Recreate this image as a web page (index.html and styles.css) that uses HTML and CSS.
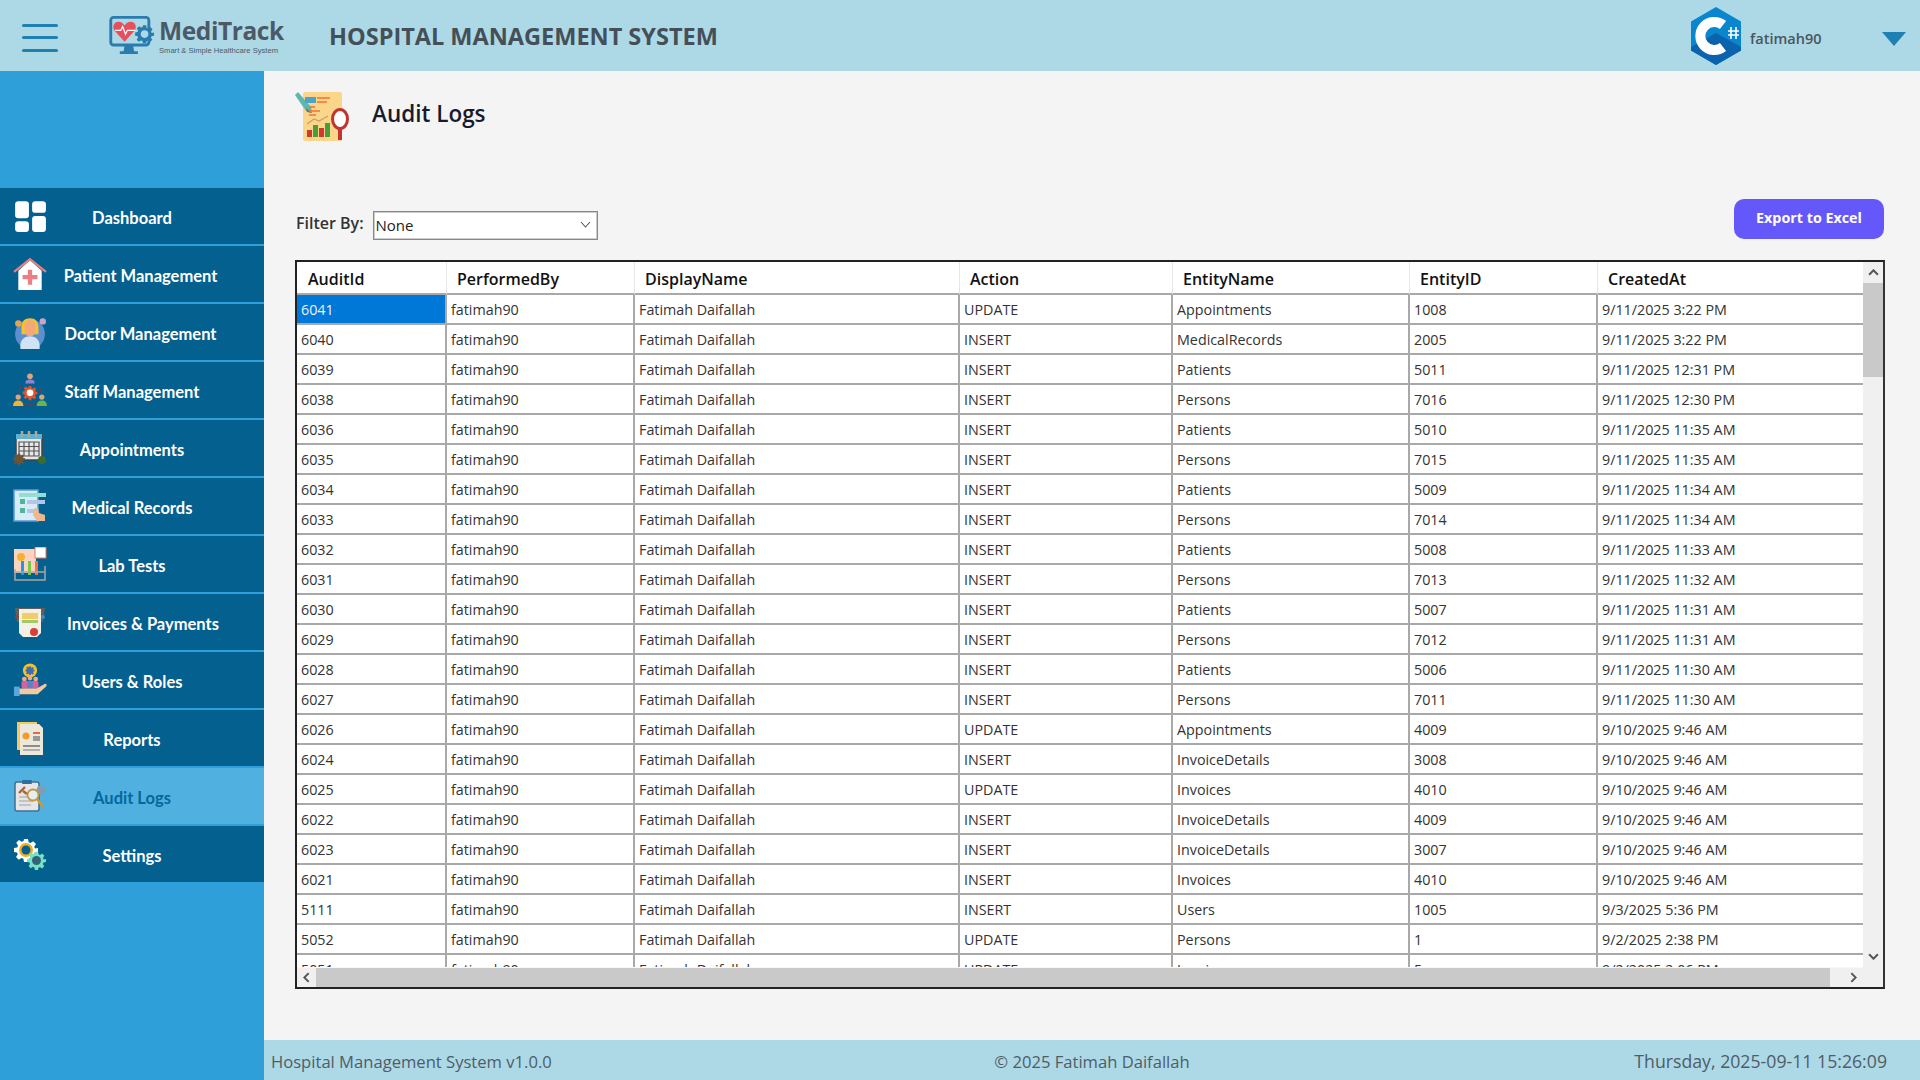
FILE: index.html
```html
<!DOCTYPE html>
<html lang="en">
<head>
  <meta charset="UTF-8"/>
  <title>MediTrack - Audit Logs</title>
  <link rel="stylesheet" href="styles.css">
</head>
<body>
  <svg class="sprites" width="0" height="0">
    <symbol id="gear" viewBox="0 0 24 24">
      <path d="M10 1h4l.6 3.2 1.9.8 2.7-1.8 2.8 2.8-1.8 2.7.8 1.9L24 10v4l-3.2.6-.8 1.9 1.8 2.7-2.8 2.8-2.7-1.8-1.9.8L14 24h-4l-.6-3.2-1.9-.8-2.7 1.8-2.8-2.8 1.8-2.7-.8-1.9L0 14v-4l3.2-.6.8-1.9L2.2 4.8 5 2l2.7 1.8 1.9-.8z"/>
    </symbol>
  </svg>

  <header class="topbar">
    <div class="burger"><span></span><span></span><span></span></div>
    <div class="logo">
      <svg class="logo-mark" viewBox="0 0 56 42">
        <rect x="1.5" y="1.5" width="40" height="29" rx="3" fill="none" stroke="#2a7cae" stroke-width="3"/>
        <path d="M16 27 5.500 15.500C2.500 11 5 6 9.500 6c3 0 5 1.800 6.500 4 1.500-2.200 3.500-4 6.500-4 4.500 0 7 5 4 9.500z" fill="#e5505c"/>
        <path d="M6 15h6l2-4 3 8 2-4h8" fill="none" stroke="#fff" stroke-width="1.300"/>
        <use href="#gear" x="27" y="9" width="20" height="20" fill="#2a7cae"/>
        <circle cx="37" cy="19" r="4" fill="#add8e6"/>
        <path d="M16 31h9l1 6h4v3H11v-3h4z" fill="#2a7cae"/>
      </svg>
      <div class="logo-text">
        <div class="logo-name">MediTrack</div>
        <div class="logo-tag">Smart &amp; Simple Healthcare System</div>
      </div>
    </div>
    <h1 class="app-title">HOSPITAL MANAGEMENT SYSTEM</h1>
    <div class="user">
      <svg class="user-pic" viewBox="0 0 50 58">
        <path d="M25 0 50 14.500v29L25 58 0 43.500v-29z" fill="#0a86cf"/>
        <path d="M0 43.500V40l25-14 25 14v3.500L25 58z" fill="#0b62ad"/>
        <path d="M32 40a14 14 0 1 1 0-22" fill="none" stroke="#fff" stroke-width="10"/>
        <path d="M40 20v12M45 20v12M37 24h11M37 28h11" stroke="#fff" stroke-width="1.600"/>
      </svg>
      <span class="user-name">fatimah90</span>
      <span class="user-caret"></span>
    </div>
  </header>

  <div class="middle">
    <nav class="sidebar">
      <a class="nav-item">
        <svg class="nav-icon" viewBox="0 0 32 32" fill="#fff">
          <rect x="2" y="2" width="13" height="16" rx="3"/><rect x="18" y="2" width="13" height="11" rx="3"/>
          <rect x="2" y="21" width="13" height="10" rx="3"/><rect x="18" y="16" width="13" height="15" rx="3"/>
        </svg>
        <span>Dashboard</span>
      </a>
      <a class="nav-item off-1">
        <svg class="nav-icon" viewBox="0 0 32 32">
          <path d="M5 13 16 3l11 10v18H5z" fill="#fff"/>
          <path d="M1 14 16 2l15 12" fill="none" stroke="#e98080" stroke-width="2.200"/>
          <path d="M14 13h4v5h5v4h-5v5h-4v-5H9v-4h5z" fill="#ec7f86" transform="translate(0 -1)"/>
        </svg>
        <span>Patient Management</span>
      </a>
      <a class="nav-item off-1">
        <svg class="nav-icon" viewBox="0 0 32 32">
          <circle cx="16" cy="18" r="14" fill="#5b8fd0"/>
          <circle cx="5" cy="8" r="3" fill="#e7a44f"/><circle cx="28" cy="6" r="3" fill="#c9a6c9"/>
          <path d="M8 12c0-6 3-9 8-9s8 3 8 9v6H8z" fill="#f2c232"/>
          <path d="M11 10c0-3 2-5 5-5s5 2 5 5v5c0 3-2 5-5 5s-5-2-5-5z" fill="#f3a878"/>
          <path d="M7 32c-1-8 3-12 9-12s10 4 9 12z" fill="#cfe3f4"/>
        </svg>
        <span>Doctor Management</span>
      </a>
      <a class="nav-item">
        <svg class="nav-icon" viewBox="0 0 36 36">
          <circle cx="18" cy="3.500" r="3" fill="#d8a77f"/><path d="M13 11c0-3 2-4 5-4s5 1 5 4z" fill="#8b84d7"/>
          <path d="M8 14 6 22M28 14l2 8M11 33h14" fill="none" stroke="#7a3b4a" stroke-width="1"/>
          <use href="#gear" x="10" y="13" width="16" height="16" fill="#e5532d"/><circle cx="18" cy="21" r="3.500" fill="#fff"/>
          <circle cx="5.500" cy="25.500" r="2.800" fill="#d8a77f"/><path d="M0 35c0-4 2-6 5.500-6s5.500 2 5.500 6z" fill="#f2b233"/>
          <circle cx="30.500" cy="25.500" r="2.800" fill="#d8a77f"/><path d="M25 35c0-4 2-6 5.500-6s5.500 2 5.500 6z" fill="#6cb34a"/>
        </svg>
        <span>Staff Management</span>
      </a>
      <a class="nav-item">
        <svg class="nav-icon" viewBox="0 0 34 34">
          <rect x="3" y="3" width="26" height="26" rx="2" fill="#e7e7e7" stroke="#444" stroke-width="1.500"/>
          <rect x="3" y="3" width="26" height="5" fill="#59b3d6"/>
          <path d="M9 0v6M16 0v6M23 0v6" stroke="#b9a58c" stroke-width="2.500"/>
          <path d="M6 11h20v14H6zM6 15.500h20M6 20h20M11 11v14M16 11v14M21 11v14" fill="none" stroke="#555" stroke-width="1.200"/>
          <use href="#gear" x="0" y="22" width="12" height="12" fill="#6b5536"/>
          <circle cx="29" cy="29" r="4" fill="#3f6b2c"/>
        </svg>
        <span>Appointments</span>
      </a>
      <a class="nav-item">
        <svg class="nav-icon" viewBox="0 0 34 34">
          <rect x="1" y="1" width="24" height="31" fill="#d7ecf7" stroke="#5b9bd5" stroke-width="1.500"/>
          <rect x="6" y="4" width="27" height="4" fill="#8fe0d0"/>
          <rect x="7" y="10" width="5" height="5" fill="#4eb59a"/><rect x="7" y="19" width="5" height="5" fill="#4eb59a"/>
          <rect x="14" y="11" width="18" height="4" fill="#b7c4ea"/><rect x="14" y="20" width="10" height="4" fill="#b7c4ea"/>
          <path d="M22 19l3 0 1 5 6 2v6H24l-4-6z" fill="#efb78c"/>
        </svg>
        <span>Medical Records</span>
      </a>
      <a class="nav-item">
        <svg class="nav-icon" viewBox="0 0 34 34">
          <rect x="1" y="2" width="22" height="24" fill="#fbd3c2"/><circle cx="8" cy="10" r="4" fill="#f2b233"/>
          <rect x="22" y="0" width="11" height="11" fill="#fff" stroke="#e8735a"/>
          <rect x="8" y="14" width="3" height="14" fill="#1d9be0"/><rect x="15" y="14" width="3" height="14" fill="#7ac943"/><rect x="22" y="14" width="3" height="14" fill="#f2743c"/>
          <path d="M2 22v11h30V19M2 25h30" fill="none" stroke="#a8a8a8" stroke-width="1.500"/>
        </svg>
        <span>Lab Tests</span>
      </a>
      <a class="nav-item off-2">
        <svg class="nav-icon" viewBox="0 0 34 34">
          <path d="M2 3h30l-2 14H4z" fill="#5f5f5f"/>
          <path d="M6 4h22v24l-4 4H10l-4-4z" fill="#f4f0e4"/>
          <rect x="9" y="8" width="16" height="6" fill="#f2cb6b"/><rect x="9" y="15" width="16" height="3" fill="#a4c96a"/>
          <circle cx="21" cy="27" r="4" fill="#d9403a"/><circle cx="4" cy="12" r="2" fill="#8a4a2a"/><circle cx="30" cy="12" r="2" fill="#3f8ac6"/>
        </svg>
        <span>Invoices &amp; Payments</span>
      </a>
      <a class="nav-item">
        <svg class="nav-icon" viewBox="0 0 36 36">
          <circle cx="18" cy="8" r="7.500" fill="#f2c232"/><use href="#gear" x="13" y="3" width="10" height="10" fill="#3f6cb0"/>
          <circle cx="12" cy="17" r="2.500" fill="#efa98a"/><circle cx="18" cy="16" r="2.500" fill="#efa98a"/><circle cx="24" cy="17" r="2.500" fill="#efa98a"/>
          <rect x="9" y="19" width="18" height="8" rx="2" fill="#d95fa0"/><rect x="15" y="19" width="6" height="8" fill="#5d80c9"/>
          <path d="M5 27h20l9-5c2 0 2 2 1 3l-9 8H5z" fill="#f5c9a0"/><rect x="1" y="25" width="6" height="10" fill="#5ba6e0"/>
        </svg>
        <span>Users &amp; Roles</span>
      </a>
      <a class="nav-item">
        <svg class="nav-icon" viewBox="0 0 34 34">
          <path d="M4 1h20v28H4z" fill="#f6c958"/><path d="M7 3h19l4 4v27H7z" fill="#ece8dc"/>
          <circle cx="13" cy="15" r="3.500" fill="#f29b26"/><rect x="20" y="11" width="7" height="2" fill="#e9683f"/>
          <rect x="20" y="15" width="7" height="5" fill="#9a9a9a"/><rect x="10" y="24" width="17" height="2" fill="#8d8d8d"/><rect x="10" y="28" width="17" height="2" fill="#b0b0b0"/>
        </svg>
        <span>Reports</span>
      </a>
      <a class="nav-item active">
        <svg class="nav-icon" viewBox="0 0 34 34">
          <rect x="2" y="3" width="24" height="29" rx="2" fill="#e6e6e6" stroke="#3f6f96" stroke-width="1.500"/>
          <rect x="9" y="1" width="10" height="4" rx="1" fill="#2a6f9e"/>
          <path d="M6 18h14M6 22h14M6 26h12" stroke="#a0a0a0" stroke-width="1.200"/>
          <path d="M6 14l6-6M10 12l4 3" stroke="#a5663e" stroke-width="2.400"/>
          <circle cx="28" cy="11" r="4.500" fill="#7f9db4"/>
          <circle cx="20" cy="16" r="5.500" fill="#e2f0f6" stroke="#c2953f" stroke-width="1.800"/>
          <path d="M24 20l6 8" stroke="#d19a2c" stroke-width="2.400"/>
        </svg>
        <span>Audit Logs</span>
      </a>
      <a class="nav-item">
        <svg class="nav-icon" viewBox="0 0 34 34">
          <use href="#gear" x="1" y="1" width="24" height="24" fill="#fff"/><circle cx="13" cy="13" r="7" fill="#f2ad20"/><circle cx="13" cy="13" r="4.500" fill="#05608f"/>
          <use href="#gear" x="14" y="14" width="19" height="19" fill="#74e3c3"/><circle cx="23.500" cy="23.500" r="4.500" fill="#35627a"/>
        </svg>
        <span>Settings</span>
      </a>
    </nav>

    <div class="right">
      <main class="content">
        <div class="page-head">
          <svg class="page-icon" viewBox="0 0 55 50">
            <rect x="8" y="0" width="39" height="49" rx="2" fill="#fbd58a"/>
            <path d="M0 3 3 0l13 15 1 6-6-2z" fill="#5fb8b0"/>
            <path d="M11 16l5 4 1 1-5-1z" fill="#8a6a55"/>
            <rect x="10" y="5" width="11" height="6" fill="#4fa3c8"/>
            <path d="M22 6h13M22 10h10M14 15h6M14 19h11M14 23h7" stroke="#e9743a" stroke-width="1.300"/>
            <path d="M12 32l7-5 5 2 9-5" fill="none" stroke="#c8a06a" stroke-width="1.300"/>
            <rect x="12" y="38" width="5" height="7" fill="#d1382f"/><rect x="18" y="33" width="5" height="12" fill="#4a9e3a"/>
            <rect x="24" y="36" width="5" height="9" fill="#d1382f"/><rect x="30" y="31" width="5" height="14" fill="#4a9e3a"/>
            <ellipse cx="45" cy="27" rx="7.500" ry="9.500" fill="#fff" stroke="#c2342f" stroke-width="3"/>
            <path d="M45 37v11" stroke="#c2342f" stroke-width="4"/>
          </svg>
          <h2 class="page-title">Audit Logs</h2>
        </div>

        <div class="toolbar">
          <label class="filter-label">Filter By:</label>
          <div class="select">
            <span>None</span>
            <svg width="11" height="7" viewBox="0 0 11 7"><path d="M1 1l4.500 5L10 1" fill="none" stroke="#555" stroke-width="1.100"/></svg>
          </div>
          <button class="export-btn">Export to Excel</button>
        </div>

        <div class="grid-box">
          <div class="grid-view">
            <table class="grid">
              <colgroup>
                <col class="c1"><col class="c2"><col class="c3"><col class="c4"><col class="c5"><col class="c6"><col class="c7">
              </colgroup>
              <thead>
                <tr><th>AuditId</th><th>PerformedBy</th><th>DisplayName</th><th>Action</th><th>EntityName</th><th>EntityID</th><th>CreatedAt</th></tr>
              </thead>
              <tbody id="rows"></tbody>
            </table>
          </div>
          <div class="vbar">
            <svg class="arrow" viewBox="0 0 10 6"><path d="M1 5l4-4 4 4" fill="none" stroke="#555" stroke-width="1.800"/></svg>
            <div class="vthumb"></div>
            <svg class="arrow vbar-end" viewBox="0 0 10 6"><path d="M1 1l4 4 4-4" fill="none" stroke="#555" stroke-width="1.800"/></svg>
          </div>
          <div class="hbar">
            <svg class="harrow" viewBox="0 0 6 10"><path d="M5 1 1 5l4 4" fill="none" stroke="#555" stroke-width="1.800"/></svg>
            <div class="hthumb"></div>
            <svg class="harrow" viewBox="0 0 6 10"><path d="M1 1l4 4-4 4" fill="none" stroke="#555" stroke-width="1.800"/></svg>
          </div>
          <div class="corner"></div>
        </div>
      </main>

      <footer class="statusbar">
        <span class="st-left">Hospital Management System v1.0.0</span>
        <span class="st-mid">© 2025 Fatimah Daifallah</span>
        <span class="st-right">Thursday, 2025-09-11 15:26:09</span>
      </footer>
    </div>
  </div>

  <script>
    // id, action, entity, entity id, created
    const rows = [
      [6041,'UPDATE','Appointments',1008,'9/11/2025 3:22 PM'],
      [6040,'INSERT','MedicalRecords',2005,'9/11/2025 3:22 PM'],
      [6039,'INSERT','Patients',5011,'9/11/2025 12:31 PM'],
      [6038,'INSERT','Persons',7016,'9/11/2025 12:30 PM'],
      [6036,'INSERT','Patients',5010,'9/11/2025 11:35 AM'],
      [6035,'INSERT','Persons',7015,'9/11/2025 11:35 AM'],
      [6034,'INSERT','Patients',5009,'9/11/2025 11:34 AM'],
      [6033,'INSERT','Persons',7014,'9/11/2025 11:34 AM'],
      [6032,'INSERT','Patients',5008,'9/11/2025 11:33 AM'],
      [6031,'INSERT','Persons',7013,'9/11/2025 11:32 AM'],
      [6030,'INSERT','Patients',5007,'9/11/2025 11:31 AM'],
      [6029,'INSERT','Persons',7012,'9/11/2025 11:31 AM'],
      [6028,'INSERT','Patients',5006,'9/11/2025 11:30 AM'],
      [6027,'INSERT','Persons',7011,'9/11/2025 11:30 AM'],
      [6026,'UPDATE','Appointments',4009,'9/10/2025 9:46 AM'],
      [6024,'INSERT','InvoiceDetails',3008,'9/10/2025 9:46 AM'],
      [6025,'UPDATE','Invoices',4010,'9/10/2025 9:46 AM'],
      [6022,'INSERT','InvoiceDetails',4009,'9/10/2025 9:46 AM'],
      [6023,'INSERT','InvoiceDetails',3007,'9/10/2025 9:46 AM'],
      [6021,'INSERT','Invoices',4010,'9/10/2025 9:46 AM'],
      [5111,'INSERT','Users',1005,'9/3/2025 5:36 PM'],
      [5052,'UPDATE','Persons',1,'9/2/2025 2:38 PM'],
      [5051,'UPDATE','Invoices',5,'9/2/2025 2:06 PM']
    ];
    document.getElementById('rows').innerHTML = rows.map((r, i) => `<tr>
      <td${i === 0 ? ' class="selected"' : ''}>${r[0]}</td><td>fatimah90</td><td>Fatimah Daifallah</td>
      <td>${r[1]}</td><td>${r[2]}</td><td>${r[3]}</td><td>${r[4]}</td></tr>`).join('');
  </script>
</body>
</html>
```

FILE: styles.css
```css
* { box-sizing: border-box; margin: 0; padding: 0; }
html, body { height: 100%; overflow: hidden; }
body {
  display: flex; flex-direction: column;
  font-family: "Open Sans", "Noto Sans", sans-serif;
  background: #f4f4f4; color: #222;
}
.sprites { position: absolute; }

/* top bar */
.topbar {
  flex: 0 0 71px; display: flex; align-items: center;
  background: #add8e6;
}
.burger { width: 36px; margin-left: 22px; margin-top: 4px; display: flex; flex-direction: column; gap: 9.500px; }
.burger span { display: block; height: 3px; background: #1f81b1; border-radius: 2px; }
.logo { display: flex; align-items: flex-start; margin-left: 51px; width: 220px; height: 40px; }
.logo-mark { width: 54px; height: 40px; flex: none; margin-right: -4px; }
.logo-text { color: #4b5a66; }
.logo-name { font: 700 24.500px/26px "Open Sans", sans-serif; letter-spacing: -.4px; margin-top: 2px; }
.logo-tag { font: 7.600px/9px "Liberation Sans", sans-serif; margin-top: 2px; }
.app-title { font: 700 23.500px "Open Sans", sans-serif; color: #444f58; }
.user { margin-left: auto; display: flex; align-items: center; }
.user-pic { width: 50px; height: 58px; }
.user-name { font-size: 14.500px; font-weight: 600; color: #4a5560; margin-left: 9px; margin-top: 6px; width: 132px; }
.user-caret {
  width: 0; height: 0; margin-right: 14px; margin-top: 6px;
  border-left: 12.500px solid transparent; border-right: 12.500px solid transparent;
  border-top: 14px solid #1f81b1;
}

/* sidebar */
.middle { flex: 1; display: flex; min-height: 0; }
.sidebar { flex: 0 0 264px; background: #2e9fd9; padding-top: 117px; }
.nav-item {
  height: 58px; display: flex; align-items: center; position: relative;
  background: #04608e; border-bottom: 2px solid #2e9fd9;
  color: #fff; font: bold 16.500px "Lato", sans-serif;
}
.nav-item span { flex: 1; text-align: center; padding-top: 3px; }
.nav-item.off-1 span { padding-left: 17px; }
.nav-item.off-2 span { padding-left: 22px; }
.nav-icon { position: absolute; left: 13px; top: 11px; width: 34px; height: 34px; }
.nav-item.active { background: #50b0e0; color: #05689c; }

/* content */
.right { flex: 1; min-width: 0; display: flex; flex-direction: column; }
.content { flex: 1; min-height: 0; padding: 17px 35px 0 31px; display: flex; flex-direction: column; }
.page-head { display: flex; align-items: center; height: 56px; }
.page-icon { width: 55px; height: 50px; margin-top: 2px; }
.page-title { font-size: 22.500px; font-weight: 600; color: #1a1a2e; margin-left: 22px; margin-top: -5px; }
.toolbar { display: flex; align-items: flex-end; margin-top: 55px; height: 41px; }
.filter-label { font-size: 16px; font-weight: 600; color: #333; line-height: 29px; margin-left: 1px; padding-bottom: 2px; }
.select {
  width: 225px; height: 29px; margin-left: 9px; padding: 0 6px 2px 2px;
  display: flex; align-items: center; justify-content: space-between;
  background: #fff; border: 1px solid #888; box-shadow: inset 0 0 0 1px #ccc;
  font-size: 15px; color: #222;
}
.export-btn {
  margin-left: auto; width: 150px; height: 40px; margin: 0 1px 1px auto; padding-bottom: 4px;
  background: #6558fb; color: #fff; border: 0; border-radius: 10px;
  font: bold 14.300px "Open Sans", sans-serif;
}

/* data grid */
.grid-box {
  margin-top: 20px; width: 1590px; height: 729px;
  display: grid; grid-template-columns: 1fr 20px; grid-template-rows: 1fr 20px;
  background: #fff; border: 2px solid #222; border-right-color: #333;
}
.grid-view { overflow: hidden; }
.grid { width: 100%; table-layout: fixed; border-collapse: separate; border-spacing: 0; font-size: 14.300px; }
.c1 { width: 150px; } .c2 { width: 188px; } .c3 { width: 325px; } .c4 { width: 213px; }
.c5 { width: 237px; } .c6 { width: 188px; } .c7 { width: auto; }
.grid th {
  height: 33px; padding: 2px 0 0 10px; text-align: left;
  font-size: 16px; font-weight: 600; color: #111;
  border-right: 1px solid #e6e6e6; border-bottom: 2px solid #a9a9a9;
}
.grid th:first-child { padding-left: 11px; }
.grid th:last-child, .grid td:last-child { border-right: 0; }
.grid td {
  height: 30px; padding-left: 4px; white-space: nowrap; overflow: hidden;
  color: #333; border-right: 2px solid #a9a9a9; border-bottom: 2px solid #a9a9a9;
}
.grid td.selected { background: #0078d7; color: #e8f2fa; }
.vbar { background: #f0f0f0; display: flex; flex-direction: column; align-items: center; }
.arrow { width: 11px; height: 7px; margin: 7px 0; flex: none; }
.vthumb { width: 100%; height: 94px; background: #c9c9c9; }
.vbar-end { margin-top: auto; margin-bottom: 7px; }
.hbar { background: #f0f0f0; border-top: 1px solid #f8f8f8; display: flex; align-items: center; }
.harrow { width: 7px; height: 11px; margin: 0 6px; flex: none; }
.hthumb { flex: 1; height: 100%; background: #c9c9c9; margin-right: 14px; }
.corner { background: #f0f0f0; }

/* footer */
.statusbar {
  flex: 0 0 40px; padding: 3px 33px 0 7px;
  display: grid; grid-template-columns: 1fr auto 1fr; align-items: center;
  background: #add8e6; color: #4f5d66; font-size: 16.600px;
}
.st-mid { margin-left: 26px; }
.st-right { text-align: right; font-size: 17.700px; margin-top: -2px; }
```
